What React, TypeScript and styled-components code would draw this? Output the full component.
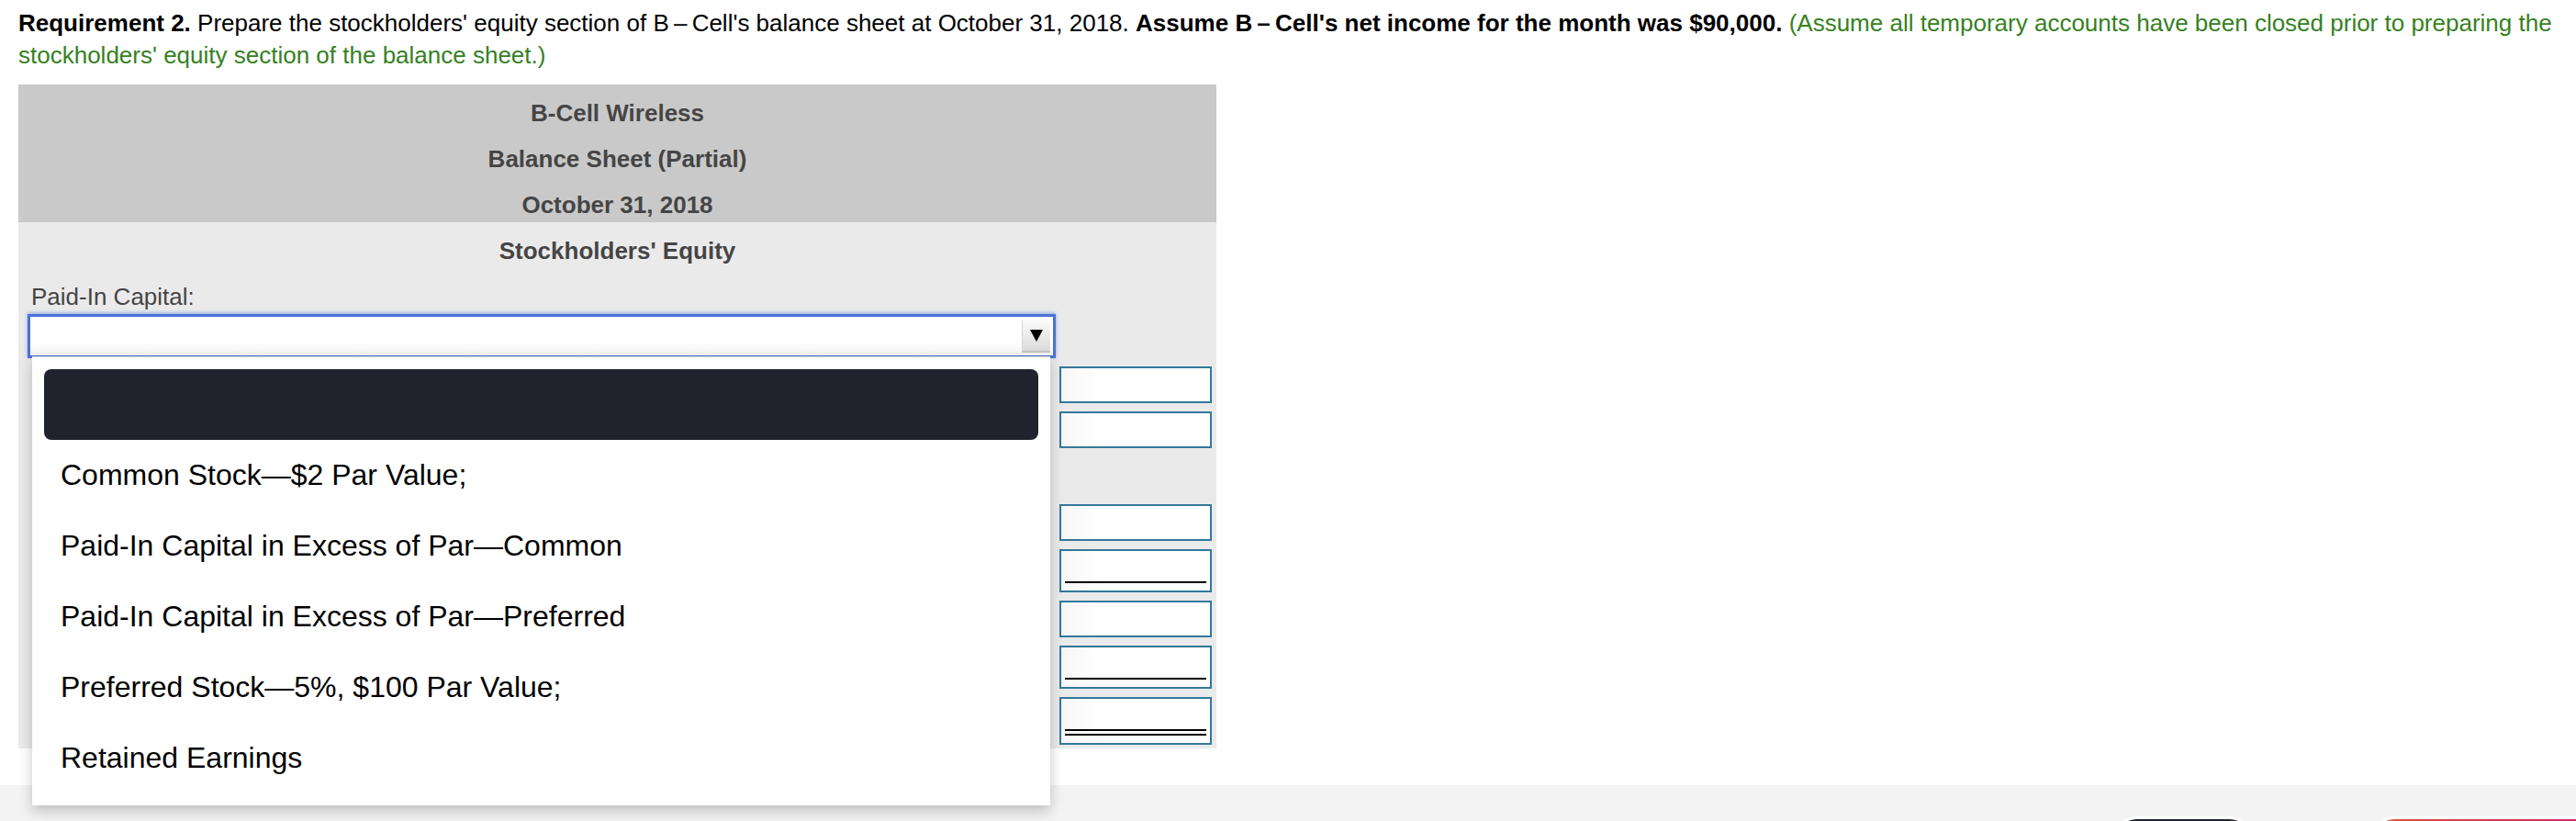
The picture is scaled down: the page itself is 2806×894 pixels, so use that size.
import styled, { createGlobalStyle } from 'styled-components';

const GlobalStyle = createGlobalStyle`
  html, body {
    margin: 0;
    padding: 0;
    background: #ffffff;
    overflow: hidden;
  }
  * {
    box-sizing: border-box;
  }
`;

const Page = styled.div`
  height: 100vh;
  display: flex;
  flex-direction: column;
  font-family: "Liberation Sans", Arial, Helvetica, sans-serif;
  color: #000;
`;

const Content = styled.main`
  flex: 1;
  padding: 8px 20px 0;
`;

const Prompt = styled.p`
  margin: 0 0 14px;
  font-size: 26px;
  line-height: 35px;
`;

const Strong = styled.strong`
  font-weight: bold;
`;

const Hint = styled.span`
  color: #36811f;
`;

const Sheet = styled.div`
  width: 1305px;
  display: grid;
  grid-template-columns: 1fr 176px;
  background: #eaeaea;
`;

const HeadRow = styled.div<{ shade?: boolean }>`
  grid-column: 1 / -1;
  height: 50px;
  padding: 14px 0 1px;
  line-height: 35px;
  font-size: 26px;
  font-weight: bold;
  text-align: center;
  color: #454545;
  background: ${p => (p.shade ? '#c9c9c9' : 'transparent')};
`;

const LabelRow = styled.div`
  grid-column: 1 / -1;
  height: 50px;
  padding: 14px 14px 1px;
  line-height: 35px;
  font-size: 26px;
  color: #454545;
`;

const LeftCell = styled.div<{ tall?: number }>`
  padding-left: 10px;
  min-height: ${p => p.tall ?? 0}px;
`;

const RightCell = styled.div<{ empty?: boolean }>`
  padding: ${p => (p.empty ? '0' : '5px 5px 4px')};
  height: ${p => (p.empty ? '52px' : 'auto')};
`;

const SelectWrap = styled.div`
  position: relative;
  height: 48px;
  margin-right: -1px;
`;

const SelectBox = styled.div`
  height: 48px;
  display: flex;
  justify-content: flex-end;
  align-items: center;
  padding: 0 3px 0 0;
  background: linear-gradient(#ffffff 70%, #f2f2f2);
  border: 3px solid #4b73d5;
  box-shadow: 0 -1px 4px rgba(75, 115, 213, 0.6);
`;

const ArrowButton = styled.div`
  width: 31px;
  height: 36px;
  display: flex;
  align-items: center;
  justify-content: center;
  background: linear-gradient(#fbfbfb, #dadada);
  border-left: 1px solid #d6d6d6;
  border-bottom: 2px solid #c4c4c4;
`;

const Menu = styled.ul`
  position: absolute;
  z-index: 10;
  top: 46px;
  left: 5px;
  right: 6px;
  margin: 0;
  padding: 13px;
  list-style: none;
  background: #ffffff;
  border-top: 1px solid #d4d4d4;
  box-shadow: 0 6px 14px rgba(0, 0, 0, 0.22);
`;

const MenuItem = styled.li<{ active?: boolean }>`
  height: 77px;
  display: flex;
  align-items: center;
  padding: 0 18px;
  font-size: 32px;
  color: #000;
  border-radius: 8px;
  background: ${p => (p.active ? '#20232d' : 'transparent')};
`;

const AmountBox = styled.div<{ rule: 'none' | 'single' | 'double' }>`
  height: ${p => (p.rule === 'double' ? 52 : p.rule === 'single' ? 47 : 40)}px;
  display: flex;
  flex-direction: column;
  padding: 0 4px ${p => (p.rule === 'none' ? 0 : 8)}px;
  border: 2px solid #34789a;
  background: linear-gradient(90deg, #f6f6f6, #ffffff 25%);
`;

const AmountInput = styled.input`
  flex: 1;
  min-height: 0;
  width: 100%;
  border: none;
  background: transparent;
  outline: none;
`;

const Rule = styled.div<{ double?: boolean }>`
  border-bottom: ${p => (p.double ? '7px double #000' : '2px solid #000')};
`;

const Footer = styled.footer`
  flex: 0 0 39px;
  overflow: hidden;
  display: flex;
  justify-content: flex-end;
  align-items: flex-start;
  gap: 133px;
  background: #f3f3f3;
`;

const FooterButton = styled.button<{ primary?: boolean }>`
  margin-top: 37px;
  height: 48px;
  width: ${p => (p.primary ? '262px' : '148px')};
  margin-right: ${p => (p.primary ? '-41px' : '0')};
  border: none;
  border-radius: 24px;
  color: #fff;
  box-shadow: 0 0 0 3px #ffffff;
  background: ${p => (p.primary ? 'linear-gradient(90deg, #dc5636, #c9276c)' : '#1f2330')};
`;

const options = [
  'Common Stock\u2014$2 Par Value;',
  'Paid-In Capital in Excess of Par\u2014Common',
  'Paid-In Capital in Excess of Par\u2014Preferred',
  'Preferred Stock\u20145%, $100 Par Value;',
  'Retained Earnings',
];

type RuleKind = 'none' | 'single' | 'double';

const amountRows: (RuleKind | null)[] = ['none', 'none', null, 'none', 'single', 'none', 'single', 'double'];

const App = () => {
  return (
    <Page>
      <GlobalStyle />
      <Content>
        <Prompt>
          <Strong>Requirement 2.</Strong> Prepare the stockholders' equity section of B{'\u2009\u2013\u2009'}Cell's balance sheet at
          October 31, 2018. <Strong>Assume B{'\u2009\u2013\u2009'}Cell's net income for the month was $90,000.</Strong>{' '}
          <Hint>(Assume all temporary accounts have been closed prior to preparing the stockholders' equity section of the balance sheet.)</Hint>
        </Prompt>

        <Sheet>
          <HeadRow shade>B-Cell Wireless</HeadRow>
          <HeadRow shade>Balance Sheet (Partial)</HeadRow>
          <HeadRow shade>October 31, 2018</HeadRow>
          <HeadRow>Stockholders' Equity</HeadRow>
          <LabelRow>Paid-In Capital:</LabelRow>

          <LeftCell tall={50}>
            <SelectWrap>
              <SelectBox>
                <ArrowButton>
                  <svg width="14" height="13" viewBox="0 0 14 13">
                    <path d="M0 0 H14 L7 13 Z" fill="#000" />
                  </svg>
                </ArrowButton>
              </SelectBox>
              <Menu>
                <MenuItem active />
                {options.map(o => (
                  <MenuItem key={o}>{o}</MenuItem>
                ))}
              </Menu>
            </SelectWrap>
          </LeftCell>
          <RightCell empty />

          {amountRows.map((rule, i) => [
            <LeftCell key={`l${i}`} />,
            rule === null ? (
              <RightCell key={`r${i}`} empty />
            ) : (
              <RightCell key={`r${i}`}>
                <AmountBox rule={rule}>
                  <AmountInput />
                  {rule !== 'none' && <Rule double={rule === 'double'} />}
                </AmountBox>
              </RightCell>
            ),
          ])}
        </Sheet>
      </Content>

      <Footer>
        <FooterButton />
        <FooterButton primary />
      </Footer>
    </Page>
  );
};

export default App;
